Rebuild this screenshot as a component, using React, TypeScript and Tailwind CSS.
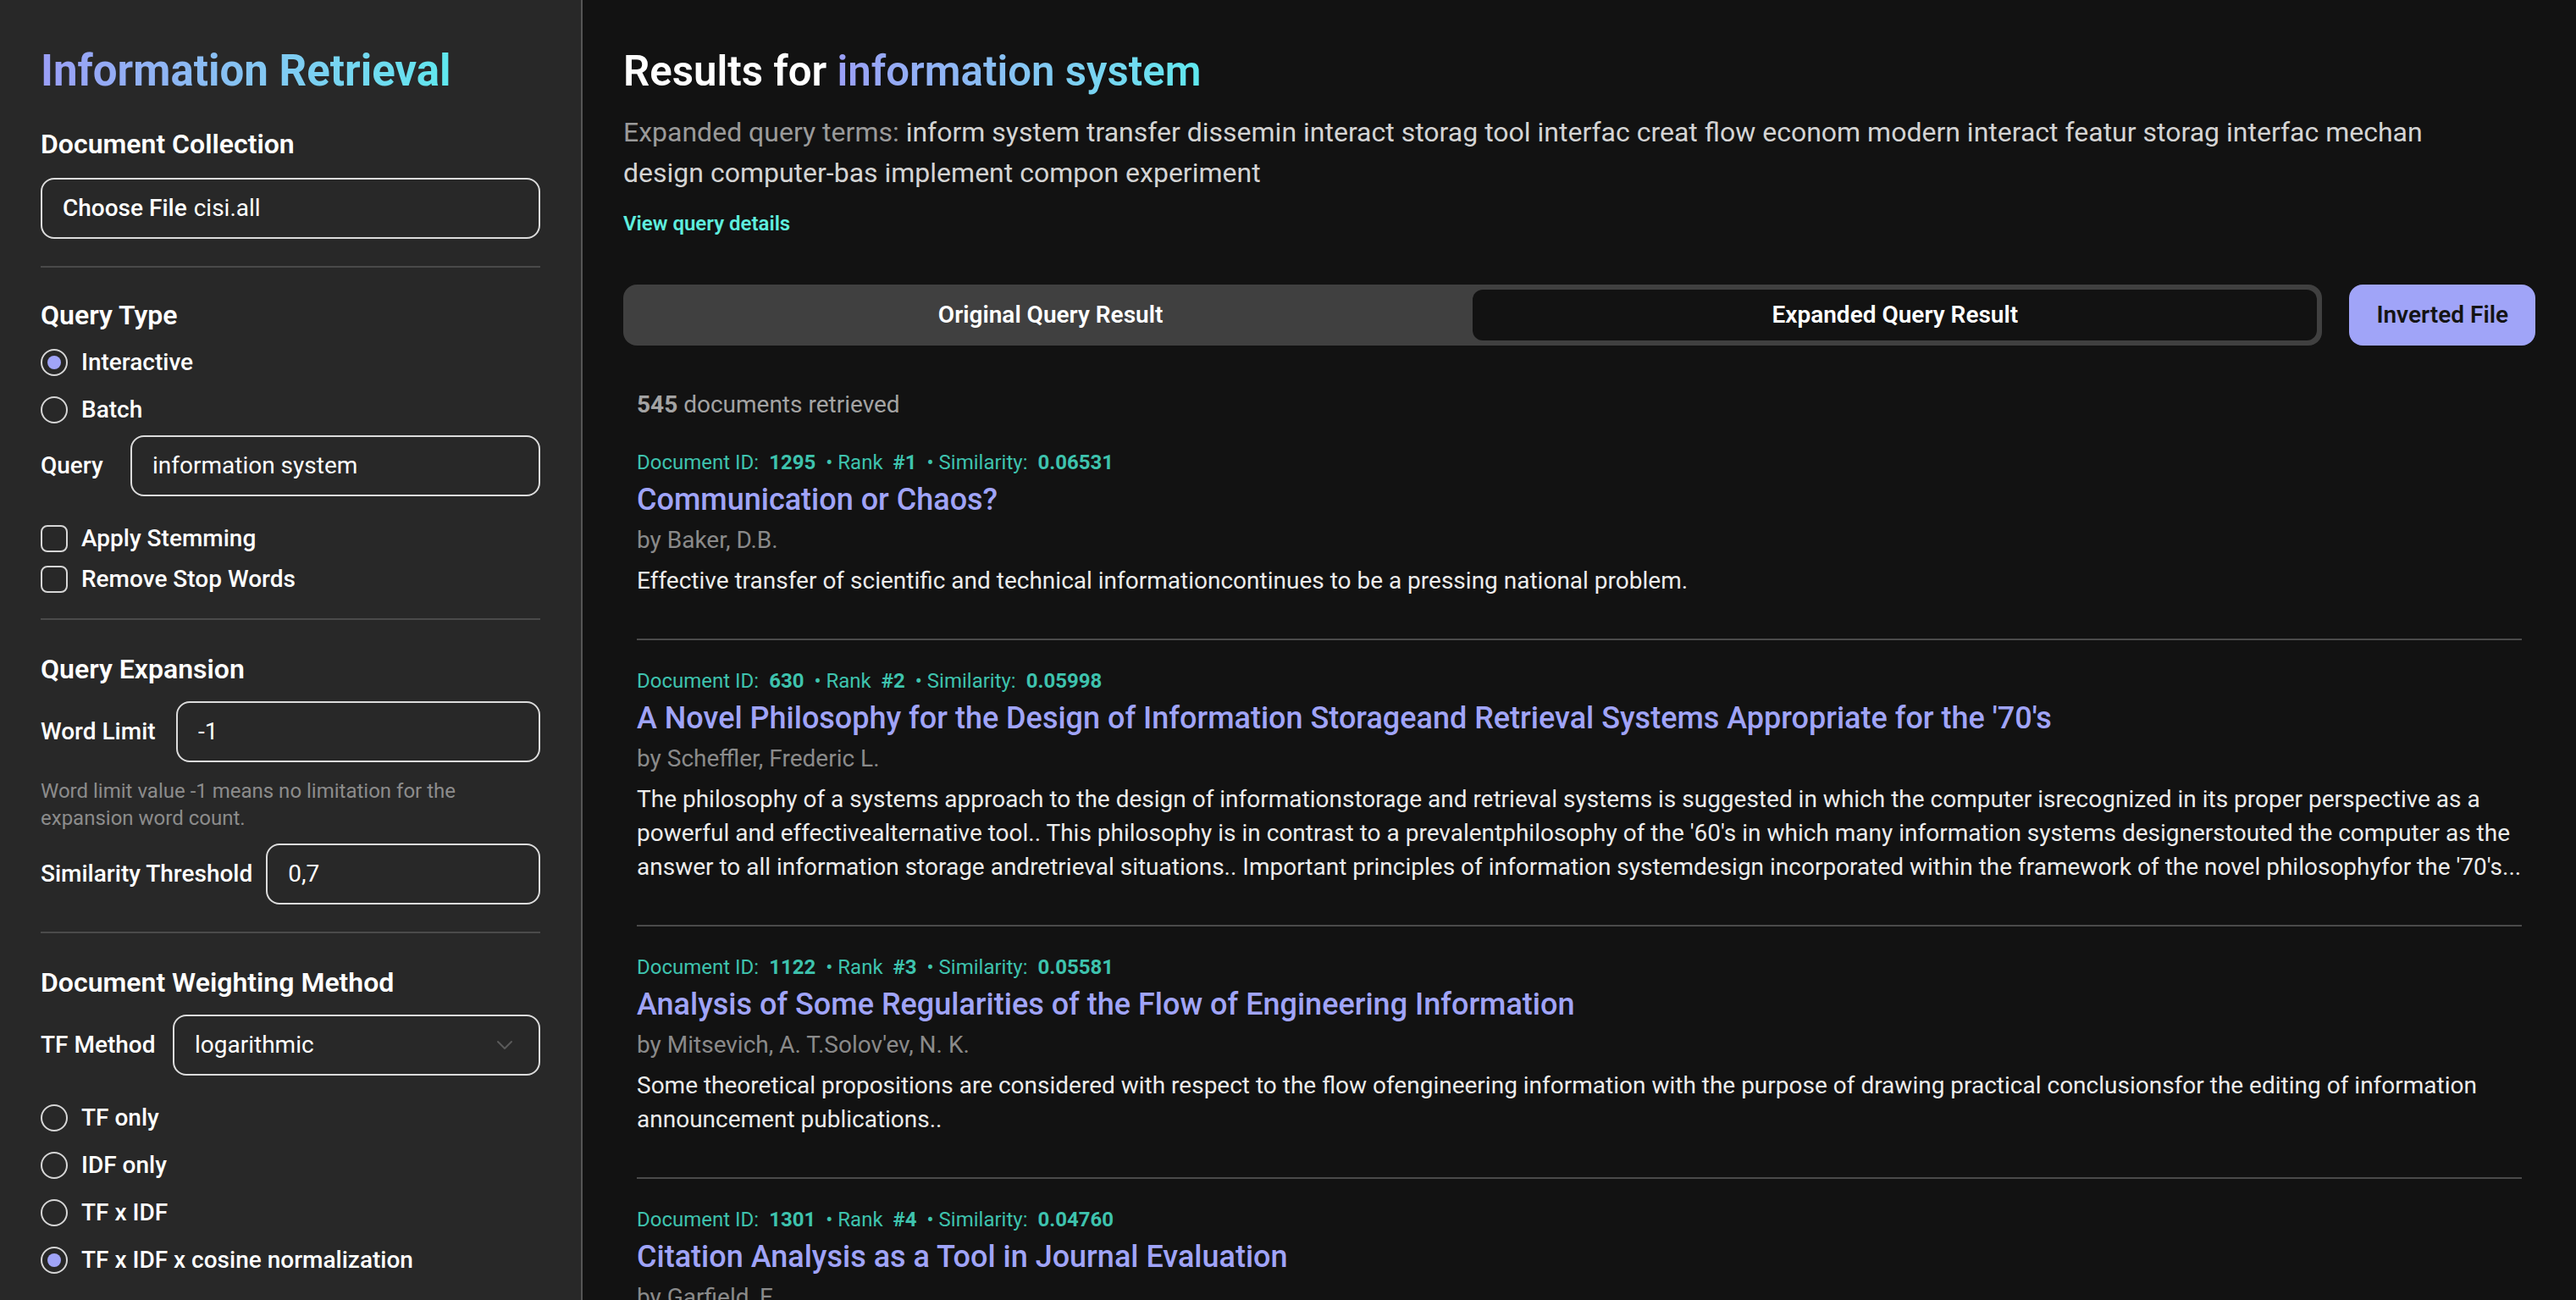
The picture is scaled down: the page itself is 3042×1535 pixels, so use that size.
import { ChevronDown } from "lucide-react";

type Result = {
  id: number;
  rank: number;
  sim: string;
  title: string;
  author: string;
  abstract: string;
};

const results: Result[] = [
  {
    id: 1295,
    rank: 1,
    sim: "0.06531",
    title: "Communication or Chaos?",
    author: "Baker, D.B.",
    abstract:
      "Effective transfer of scientific and technical informationcontinues to be a pressing national problem.",
  },
  {
    id: 630,
    rank: 2,
    sim: "0.05998",
    title:
      "A Novel Philosophy for the Design of Information Storageand Retrieval Systems Appropriate for the '70's",
    author: "Scheffler, Frederic L.",
    abstract:
      "The philosophy of a systems approach to the design of informationstorage and retrieval systems is suggested in which the computer isrecognized in its proper perspective as a powerful and effectivealternative tool.. This philosophy is in contrast to a prevalentphilosophy of the '60's in which many information systems designerstouted the computer as the answer to all information storage andretrieval situations.. Important principles of information systemdesign incorporated within the framework of the novel philosophyfor the '70's...",
  },
  {
    id: 1122,
    rank: 3,
    sim: "0.05581",
    title: "Analysis of Some Regularities of the Flow of Engineering Information",
    author: "Mitsevich, A. T.Solov'ev, N. K.",
    abstract:
      "Some theoretical propositions are considered with respect to the flow ofengineering information with the purpose of drawing practical conclusionsfor the editing of information announcement publications..",
  },
  {
    id: 1301,
    rank: 4,
    sim: "0.04760",
    title: "Citation Analysis as a Tool in Journal Evaluation",
    author: "Garfield, E.",
    abstract:
      "As a communications system, the network of journals that play a paramount role in the exchange of scientific and technical information is little understood.",
  },
];

function Radio({ label, checked }: { label: string; checked?: boolean }) {
  return (
    <label className="flex h-5 items-center gap-2 text-sm font-medium text-white">
      <span className="flex size-4 items-center justify-center rounded-full border border-[#d6d6d6]">
        {checked && <span className="size-2 rounded-full bg-[#a0a4f8]" />}
      </span>
      {label}
    </label>
  );
}

function Checkbox({ label }: { label: string }) {
  return (
    <label className="flex h-5 items-center gap-2 text-sm font-medium text-white">
      <span className="size-4 rounded-[4px] border border-[#d6d6d6]" />
      {label}
    </label>
  );
}

function Field({ label, value, labelClass = "" }: { label: string; value: string; labelClass?: string }) {
  return (
    <div className="flex items-center gap-2">
      <span className={"shrink-0 text-sm font-medium text-white " + labelClass}>{label}</span>
      <div className="flex h-9 flex-1 items-center rounded-lg border border-[#dcdcdc] px-3 text-sm text-white">
        {value}
      </div>
    </div>
  );
}

function Divider({ className }: { className: string }) {
  return <div className={"h-px bg-[#4a4a4a] " + className} />;
}

function Sidebar() {
  return (
    <aside className="w-[344px] shrink-0 border-r border-[#555555] bg-[#282828] px-6 pt-[26px]">
      <h1 className="w-fit bg-linear-to-r from-[#9a9ef6] to-[#5ee8ee] bg-clip-text text-[25.5px] leading-8 font-bold text-transparent">
        Information Retrieval
      </h1>

      <h2 className="mt-[15px] text-base leading-6 font-semibold text-white">Document Collection</h2>
      <div className="mt-2 flex h-9 items-center rounded-lg border border-[#dcdcdc] px-3 text-sm text-white">
        <span className="mr-1 font-medium">Choose File</span>
        <span>cisi.all</span>
      </div>

      <Divider className="mt-4" />

      <h2 className="mt-4 text-base leading-6 font-semibold text-white">Query Type</h2>
      <div className="mt-[6px] flex flex-col gap-2">
        <Radio label="Interactive" checked />
        <Radio label="Batch" />
      </div>
      <div className="mt-[5px]">
        <Field label="Query" value="information system" labelClass="w-[45px]" />
      </div>
      <div className="mt-[15px] flex flex-col gap-1">
        <Checkbox label="Apply Stemming" />
        <Checkbox label="Remove Stop Words" />
      </div>

      <Divider className="mt-[13px]" />

      <h2 className="mt-[17px] text-base leading-6 font-semibold text-white">Query Expansion</h2>
      <div className="mt-[7px]">
        <Field label="Word Limit" value="-1" labelClass="w-[72px]" />
      </div>
      <p className="mt-[9px] text-xs leading-4 text-[#8c8c8c]">
        Word limit value -1 means no limitation for the expansion word count.
      </p>
      <div className="mt-[7px]">
        <Field label="Similarity Threshold" value="0,7" />
      </div>

      <Divider className="mt-4" />

      <h2 className="mt-[17px] text-base leading-6 font-semibold text-white">Document Weighting Method</h2>
      <div className="mt-[7px] flex items-center gap-2">
        <span className="w-[70px] shrink-0 text-sm font-medium text-white">TF Method</span>
        <div className="flex h-9 flex-1 items-center justify-between rounded-lg border border-[#dcdcdc] pr-3 pl-3 text-sm text-white">
          <span>logarithmic</span>
          <ChevronDown size={16} strokeWidth={1.5} className="text-[#5a5a5a]" />
        </div>
      </div>
      <div className="mt-[15px] flex flex-col gap-2">
        <Radio label="TF only" />
        <Radio label="IDF only" />
        <Radio label="TF x IDF" />
        <Radio label="TF x IDF x cosine normalization" checked />
      </div>

      <Divider className="mt-[14px]" />
    </aside>
  );
}

function ResultItem({ r }: { r: Result }) {
  return (
    <div className="border-b border-[#4a4a4a] pt-4 pb-6">
      <div className="text-xs leading-4 text-[#3ec3ae]">
        Document ID:<span className="ml-1.5 font-bold">{r.id}</span>
        <span className="ml-1.5">• Rank</span>
        <span className="ml-1.5 font-bold">#{r.rank}</span>
        <span className="ml-1.5">• Similarity:</span>
        <span className="ml-1.5 font-bold">{r.sim}</span>
      </div>
      <h3 className="text-lg leading-7 font-medium text-[#a0a4f8]">{r.title}</h3>
      <div className="text-sm leading-5 text-[#8a8a8a]">by {r.author}</div>
      <p className="mt-1 line-clamp-3 text-sm leading-5 text-[#ececec]">{r.abstract}</p>
    </div>
  );
}

function Main() {
  return (
    <main className="min-w-0 flex-1 px-6 pt-[26px]">
      <h1 className="text-[24.6px] leading-8 font-semibold text-white">
        Results for{" "}
        <span className="bg-linear-to-r from-[#9a9ef6] to-[#5ee8ee] bg-clip-text text-transparent">
          information system
        </span>
      </h1>
      <p className="mt-2 text-base leading-6 text-[#d4d4d4]">
        <span className="text-[#9a9a9a]">Expanded query terms:</span> inform system transfer dissemin
        interact storag tool interfac creat flow econom modern interact featur storag interfac mechan
        <br />
        design computer-bas implement compon experiment
      </p>
      <button className="mt-[10px] block text-xs leading-4 font-semibold text-[#5eeede]">
        View query details
      </button>

      <div className="mt-[28px] flex gap-4">
        <div className="flex h-9 flex-1 rounded-lg bg-[#404040] p-[3px]">
          <button className="flex-1 rounded-md text-sm font-semibold text-white">
            Original Query Result
          </button>
          <button className="flex-1 rounded-md bg-[#121212] text-sm font-semibold text-white">
            Expanded Query Result
          </button>
        </div>
        <button className="h-9 rounded-lg bg-[#a0a4f8] px-4 text-sm font-semibold text-[#141414]">
          Inverted File
        </button>
      </div>

      <div className="px-2">
        <div className="mt-[25px] text-sm leading-5 text-[#a3a3a3]">
          <span className="font-bold">545</span> documents retrieved
        </div>
        <div>
          {results.map((r) => (
            <ResultItem key={r.id} r={r} />
          ))}
        </div>
      </div>
    </main>
  );
}

export default function App() {
  return (
    <div className="h-screen w-screen overflow-hidden bg-[#121212]">
      <div className="flex h-[768px] w-[1521px] [font-family:Roboto,'Noto_Sans',sans-serif] [zoom:2]">
        <Sidebar />
        <Main />
      </div>
    </div>
  );
}
